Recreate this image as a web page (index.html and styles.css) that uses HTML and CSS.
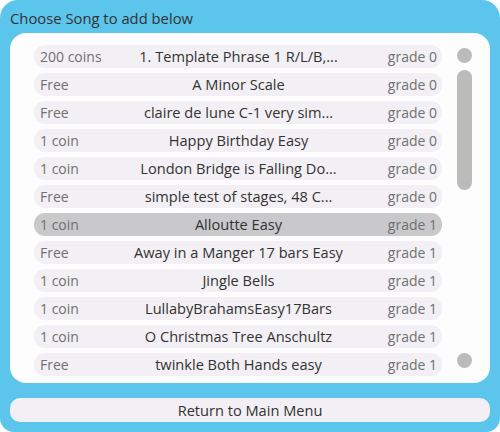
FILE: index.html
```html
<!DOCTYPE html>
<html lang="en">
<head>
  <meta charset="UTF-8" />
  <title>Choose Song</title>
  <link rel="stylesheet" href="styles.css">
</head>
<body>
  <div class="frame">
    <div class="heading">Choose Song to add below</div>

    <div class="panel">
      <div class="song-list">
        <div class="song"><span class="price">200 coins</span><span class="name">1. Template Phrase 1 R/L/B,...</span><span class="grade">grade 0</span></div>
        <div class="song"><span class="price">Free</span><span class="name">A Minor Scale</span><span class="grade">grade 0</span></div>
        <div class="song"><span class="price">Free</span><span class="name">claire de lune C-1 very sim...</span><span class="grade">grade 0</span></div>
        <div class="song"><span class="price">1 coin</span><span class="name">Happy Birthday Easy</span><span class="grade">grade 0</span></div>
        <div class="song"><span class="price">1 coin</span><span class="name">London Bridge is Falling Do...</span><span class="grade">grade 0</span></div>
        <div class="song"><span class="price">Free</span><span class="name">simple test of stages, 48 C...</span><span class="grade">grade 0</span></div>
        <div class="song selected"><span class="price">1 coin</span><span class="name">Alloutte Easy</span><span class="grade">grade 1</span></div>
        <div class="song"><span class="price">Free</span><span class="name">Away in a Manger 17 bars Easy</span><span class="grade">grade 1</span></div>
        <div class="song"><span class="price">1 coin</span><span class="name">Jingle Bells</span><span class="grade">grade 1</span></div>
        <div class="song"><span class="price">1 coin</span><span class="name">LullabyBrahamsEasy17Bars</span><span class="grade">grade 1</span></div>
        <div class="song"><span class="price">1 coin</span><span class="name">O Christmas Tree Anschultz</span><span class="grade">grade 1</span></div>
        <div class="song"><span class="price">Free</span><span class="name">twinkle Both Hands easy</span><span class="grade">grade 1</span></div>
      </div>

      <div class="scrollbar">
        <div class="scroll-btn"></div>
        <div class="scroll-thumb"></div>
        <div class="scroll-track"></div>
        <div class="scroll-btn"></div>
      </div>
    </div>

    <button class="menu-btn">Return to Main Menu</button>
  </div>
</body>
</html>
```

FILE: styles.css
```css
body {
  margin: 0;
  background: #fff;
  font-family: "Open Sans", "Noto Sans", sans-serif;
  font-size: 14px;
}
.frame {
  width: 500px;
  height: 432px;
  box-sizing: border-box;
  background: #5bc5ec;
  border-radius: 18px 18px 14px 14px;
  padding: 0 10px 10px;
  display: flex;
  flex-direction: column;
}
.heading {
  height: 33px;
  line-height: 37px;
  font-size: 14.8px;
  color: #333;
  white-space: nowrap;
}
.panel {
  height: 350px;
  box-sizing: border-box;
  background: #fcfdfc;
  border-radius: 16px;
  padding: 12px 18px 0 24px;
  display: flex;
  gap: 15px;
}
.song-list {
  width: 408px;
  display: flex;
  flex-direction: column;
  gap: 5px;
}
.song {
  height: 23px;
  background: #f2f0f4;
  border-radius: 11px;
  display: flex;
  align-items: center;
  padding: 0 5px 0 6px;
  line-height: 23px;
}
.song.selected {
  background: #c9c8ca;
}
.price {
  width: 90px;
  color: #707070;
}
.name {
  flex: 1;
  text-align: center;
  font-size: 14.6px;
  color: #333;
  white-space: nowrap;
}
.grade {
  width: 90px;
  text-align: right;
  color: #707070;
}
.scrollbar {
  width: 15px;
  padding: 3px 0 15px;
  display: flex;
  flex-direction: column;
  gap: 7px;
}
.scroll-btn {
  width: 15px;
  height: 15px;
  border-radius: 50%;
  background: #bbbcba;
}
.scroll-thumb {
  height: 120px;
  border-radius: 8px;
  background: #bbbcba;
}
.scroll-track {
  flex: 1;
}
.menu-btn {
  margin-top: 15px;
  height: 24px;
  border: none;
  border-radius: 10px;
  background: #f2f0f4;
  color: #333;
  font-family: inherit;
  font-size: 14.6px;
  padding: 0;
}
```
